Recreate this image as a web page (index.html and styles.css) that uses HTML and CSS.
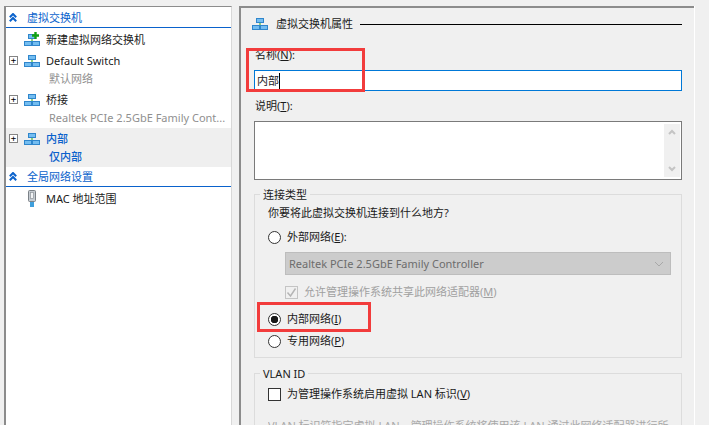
FILE: index.html
```html
<!DOCTYPE html>
<html>

<head>
    <meta charset="utf-8" />
    <title>虚拟交换机管理器</title>
    <link rel="stylesheet" href="styles.css">
</head>

<body>
    <svg class="defs" width="0" height="0">
        <symbol id="switch" viewBox="0 0 16 12">
            <path d="M8 4v4M3.5 8h9" fill="none" stroke="#63c04a" stroke-width="1.4" />
            <rect x="4.5" y="0.5" width="7" height="4" fill="#74bdf0" stroke="#2f86cc" />
            <rect x="0.5" y="7.5" width="7" height="4" fill="#74bdf0" stroke="#2f86cc" />
            <rect x="8.5" y="7.5" width="7" height="4" fill="#74bdf0" stroke="#2f86cc" />
        </symbol>
        <symbol id="collapse" viewBox="0 0 8 9">
            <path d="M0.8 4.2 4 1 7.2 4.2M0.8 8.2 4 5 7.2 8.2" fill="none" stroke="#0a62cc" stroke-width="2" />
        </symbol>
    </svg>

    <div class="window">
        <div class="tree">
            <div class="section">
                <svg class="chevron"><use href="#collapse" /></svg>
                <span>虚拟交换机</span>
            </div>
            <div class="row">
                <span class="expander none"></span>
                <svg class="net-icon new-icon" viewBox="0 0 16 14">
                    <use href="#switch" y="2" width="16" height="12" />
                    <path d="M11.5 0v7M8 3.5h7" stroke="#12a012" stroke-width="2.4" />
                </svg>
                <span>新建虚拟网络交换机</span>
            </div>
            <div class="row">
                <span class="expander">+</span>
                <svg class="net-icon"><use href="#switch" /></svg>
                <span>Default Switch</span>
            </div>
            <div class="sub">默认网络</div>
            <div class="row">
                <span class="expander">+</span>
                <svg class="net-icon"><use href="#switch" /></svg>
                <span>桥接</span>
            </div>
            <div class="sub">Realtek PCIe 2.5GbE Family Cont...</div>
            <div class="selected">
                <div class="row">
                    <span class="expander">+</span>
                    <svg class="net-icon"><use href="#switch" /></svg>
                    <span>内部</span>
                </div>
                <div class="sub">仅内部</div>
            </div>
            <div class="section">
                <svg class="chevron"><use href="#collapse" /></svg>
                <span>全局网络设置</span>
            </div>
            <div class="row">
                <span class="expander none"></span>
                <svg class="mac-icon" viewBox="0 0 10 17">
                    <rect x="1.5" y="0.5" width="7" height="11" rx="1" fill="#c6ccd2" stroke="#7b8187" />
                    <rect x="3.5" y="2.5" width="3" height="6" fill="#f2f4f6" stroke="#8f959b" stroke-width="0.7" />
                    <rect x="3" y="12" width="4" height="5" fill="#3f9fdc" />
                </svg>
                <span>MAC 地址范围</span>
            </div>
        </div>

        <div class="props">
            <div class="props-title">
                <svg class="net-icon"><use href="#switch" /></svg>
                <span>虚拟交换机属性</span>
                <div class="rule"></div>
            </div>

            <label class="field-label">名称(<u>N</u>):</label>
            <div class="name-input">内部<span class="caret"></span></div>

            <label class="field-label notes-label">说明(<u>T</u>):</label>
            <div class="notes">
                <div class="scrollbar">
                    <svg width="8" height="6" viewBox="0 0 8 6"><path d="M1 5 4 2l3 3" fill="none" stroke="#c4c4c4" stroke-width="2" /></svg>
                    <svg width="8" height="6" viewBox="0 0 8 6"><path d="M1 1l3 3 3-3" fill="none" stroke="#c4c4c4" stroke-width="2" /></svg>
                </div>
            </div>

            <div class="group conn-group">
                <div class="legend">连接类型</div>
                <div class="question">你要将此虚拟交换机连接到什么地方?</div>
                <div class="option external">
                    <span class="radio"></span>
                    <span>外部网络(<u>E</u>):</span>
                </div>
                <div class="select">
                    <span>Realtek PCIe 2.5GbE Family Controller</span>
                    <svg width="10" height="6" viewBox="0 0 10 6"><path d="M1 1l4 4 4-4" fill="none" stroke="#a8a8a8" /></svg>
                </div>
                <div class="share disabled">
                    <span class="check">
                        <svg width="11" height="11" viewBox="0 0 11 11"><path d="M1.5 5.5 4.5 9 9.5 1.5" fill="none" stroke="#b4b4b4" stroke-width="1.4" /></svg>
                    </span>
                    <span>允许管理操作系统共享此网络适配器(<u>M</u>)</span>
                </div>
                <div class="option internal">
                    <span class="radio on"></span>
                    <span>内部网络(<u>I</u>)</span>
                </div>
                <div class="option private">
                    <span class="radio"></span>
                    <span>专用网络(<u>P</u>)</span>
                </div>
            </div>

            <div class="group vlan-group">
                <div class="legend">VLAN ID</div>
                <div class="vlan-check">
                    <span class="check enabled"></span>
                    <span>为管理操作系统启用虚拟 LAN 标识(<u>V</u>)</span>
                </div>
                <div class="vlan-note">VLAN 标识符指定虚拟 LAN，管理操作系统将使用该 LAN 通过此网络适配器进行所</div>
            </div>
        </div>
    </div>

    <div class="mark mark-name"></div>
    <div class="mark mark-internal"></div>
</body>

</html>
```

FILE: styles.css
```css
* {
    box-sizing: border-box;
}

html, body {
    height: 100%;
}

body {
    margin: 0;
    overflow: hidden;
    position: relative;
    background: #f0f0f0;
    color: #1a1a1a;
    font-family: "Noto Sans", "Noto Sans CJK SC", sans-serif;
    font-size: 11px;
    line-height: 16px;
}

.defs {
    position: absolute;
}

.window {
    display: flex;
    gap: 7px;
    height: 425px;
    overflow: hidden;
    padding: 6px 15px 0 4px;
}

/* left tree */
.tree {
    width: 228px;
    flex: none;
    background: #fff;
    border: 1px solid #8c8c8c;
    border-width: 1px 1px 0 2px;
    border-right-color: #d8d8d8;
}

.section {
    display: flex;
    align-items: center;
    height: 21px;
    margin-top: -1px;
    padding-left: 3px;
    padding-top: 1px;
    color: #0a62cc;
    border-bottom: 1px solid #0a62cc;
}

.section:first-child {
    margin-top: 0;
}

.chevron {
    width: 8px;
    height: 9px;
    margin-right: 10px;
}

.row {
    display: flex;
    align-items: center;
    height: 21px;
    padding-left: 3px;
}

.section + .row {
    margin-top: 1px;
}

.expander {
    width: 9px;
    height: 9px;
    margin-right: 6px;
    border: 1px solid #848484;
    background: #fff;
    color: #000;
    font: 9px/7px "DejaVu Sans Mono", monospace;
    text-align: center;
}

.expander.none {
    border: 0;
    background: none;
}

.net-icon {
    width: 16px;
    height: 12px;
    margin-top: 1px;
    margin-right: 6px;
    flex: none;
}

.new-icon {
    height: 14px;
    margin-top: 0;
    margin-bottom: 1px;
}

.mac-icon {
    width: 10px;
    height: 17px;
    margin: 0 9px 0 3px;
    flex: none;
}

.sub {
    height: 18px;
    padding-left: 43px;
    color: #909090;
    white-space: nowrap;
}

.selected {
    background: #efefef;
    color: #0a62cc;
    font-weight: 500;
    height: 39px;
}

.selected .sub {
    color: #0a62cc;
}

/* right properties */
.props {
    flex: 1;
    min-width: 0;
    padding: 0 12px 0 13px;
    border-top: 2px solid #8c8c8c;
    border-left: 2px solid #8c8c8c;
    box-shadow: 1px 0 0 #fff;
}

.props-title {
    display: flex;
    align-items: center;
    height: 16px;
    margin-top: 8px;
}

.props-title .net-icon {
    margin: 0 8px 0 -2px;
}

.rule {
    flex: 1;
    height: 1px;
    margin-left: 7px;
    background: #000;
}

.field-label {
    display: block;
    margin: 15px 0 0 1px;
    height: 16px;
}

.name-input {
    display: flex;
    align-items: center;
    height: 21px;
    margin-top: 7px;
    padding-left: 2px;
    background: #fff;
    border: 1px solid #0078d7;
}

.caret {
    width: 1px;
    height: 16px;
    background: #000;
}

.notes-label {
    margin-top: 7px;
}

.notes {
    display: flex;
    justify-content: flex-end;
    height: 59px;
    margin-top: 7px;
    padding: 2px 1px;
    background: #fff;
    border: 1px solid #7a7a7a;
}

.scrollbar {
    display: flex;
    flex-direction: column;
    justify-content: space-between;
    align-items: center;
    width: 16px;
    padding: 5px 0;
    background: #f0f0f0;
}

.group {
    padding: 0 10px 0 13px;
    border: 1px solid #dcdcdc;
}

.legend {
    width: max-content;
    margin: -8px 0 0 -8px;
    padding: 0 3px;
    background: #f0f0f0;
}

.conn-group {
    height: 164px;
    margin-top: 14px;
}

.question {
    margin-top: 2px;
}

.option {
    display: flex;
    align-items: center;
    gap: 6px;
}

.radio {
    width: 13px;
    height: 13px;
    flex: none;
    background: #fff;
    border: 1px solid #333;
    border-radius: 50%;
}

.radio.on {
    background: radial-gradient(circle, #1a1a1a 0 3.5px, #fff 4px);
}

.external {
    margin-top: 8px;
}

.select {
    display: flex;
    align-items: center;
    justify-content: space-between;
    height: 23px;
    margin: 7px 0 0 17px;
    padding: 0 6px 0 3px;
    background: #cccccc;
    border: 1px solid #bdbdbd;
    color: #6d6d6d;
}

.share {
    display: flex;
    align-items: center;
    gap: 6px;
    margin: 9px 0 0 17px;
}

.disabled {
    color: #a0a0a0;
}

.check {
    width: 13px;
    height: 13px;
    flex: none;
    border: 1px solid #c4c4c4;
}

.check svg {
    display: block;
}

.check.enabled {
    background: #fff;
    border-color: #333;
}

.internal {
    margin-top: 11px;
}

.private {
    margin-top: 6px;
}

.vlan-group {
    height: 80px;
    margin-top: 15px;
}

.vlan-check {
    display: flex;
    align-items: center;
    gap: 6px;
    margin-top: 4px;
}

.vlan-note {
    margin-top: 16px;
    color: #a8a8a8;
    white-space: nowrap;
    overflow: hidden;
}

/* red annotations drawn over the screenshot */
.mark {
    position: absolute;
    border: 3px solid #f23c3c;
}

.mark-name {
    left: 246px;
    top: 48px;
    width: 119px;
    height: 44px;
}

.mark-internal {
    left: 257px;
    top: 302px;
    width: 114px;
    height: 30px;
}
```
